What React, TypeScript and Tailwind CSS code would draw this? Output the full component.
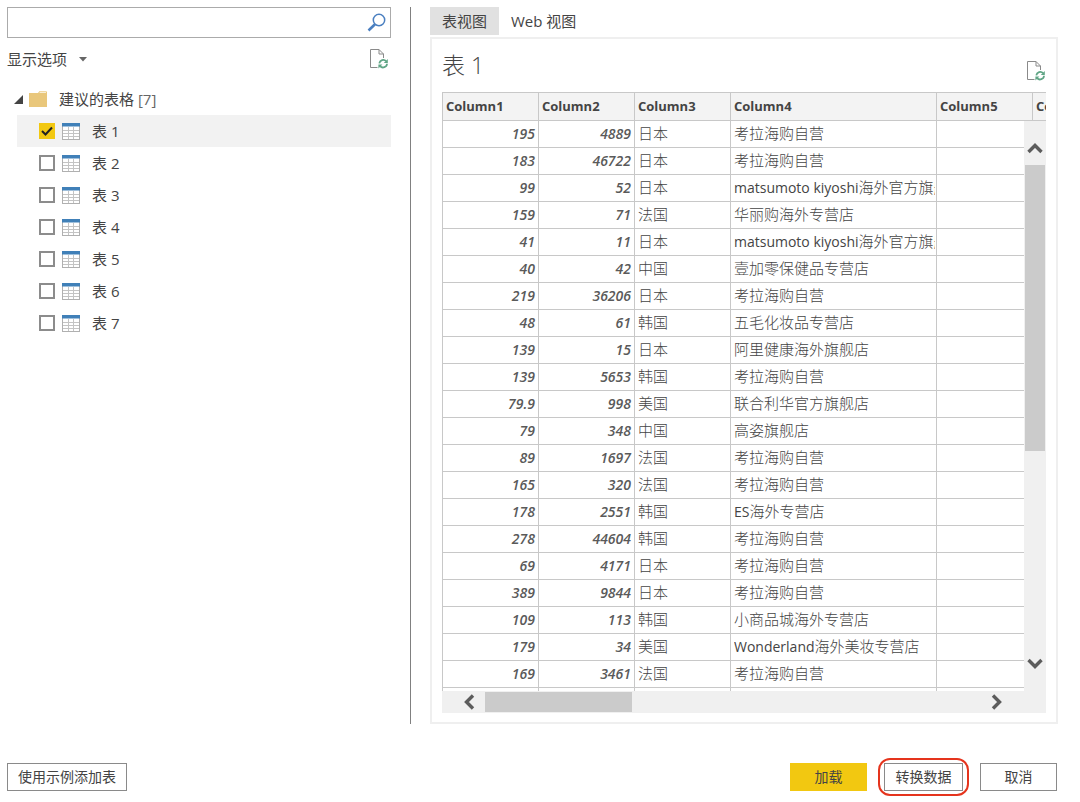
import { useState } from "react"

const tables = ["表 1", "表 2", "表 3", "表 4", "表 5", "表 6", "表 7"]

const columns = ["Column1", "Column2", "Column3", "Column4", "Column5", "Column6"]

// price, comments, country, latin part of the shop, rest of the shop
const rows = [
    ["195", "4889", "日本", "", "考拉海购自营"],
    ["183", "46722", "日本", "", "考拉海购自营"],
    ["99", "52", "日本", "matsumoto kiyoshi", "海外官方旗舰店"],
    ["159", "71", "法国", "", "华丽购海外专营店"],
    ["41", "11", "日本", "matsumoto kiyoshi", "海外官方旗舰店"],
    ["40", "42", "中国", "", "壹加零保健品专营店"],
    ["219", "36206", "日本", "", "考拉海购自营"],
    ["48", "61", "韩国", "", "五毛化妆品专营店"],
    ["139", "15", "日本", "", "阿里健康海外旗舰店"],
    ["139", "5653", "韩国", "", "考拉海购自营"],
    ["79.9", "998", "美国", "", "联合利华官方旗舰店"],
    ["79", "348", "中国", "", "高姿旗舰店"],
    ["89", "1697", "法国", "", "考拉海购自营"],
    ["165", "320", "法国", "", "考拉海购自营"],
    ["178", "2551", "韩国", "ES", "海外专营店"],
    ["278", "44604", "韩国", "", "考拉海购自营"],
    ["69", "4171", "日本", "", "考拉海购自营"],
    ["389", "9844", "日本", "", "考拉海购自营"],
    ["109", "113", "韩国", "", "小商品城海外专营店"],
    ["179", "34", "美国", "Wonderland", "海外美妆专营店"],
    ["169", "3461", "法国", "", "考拉海购自营"],
    ["", "", "", "", ""],
]

function RefreshIcon() {
    return (
        <svg width="20" height="20" viewBox="0 0 20 20" fill="none" aria-hidden="true">
            <path d="M8.5 18.5H1.5V.5H10l4.500 4.500V9" stroke="#8a8a8a" />
            <path d="M10 .5V5h4.500" stroke="#8a8a8a" />
            <path d="M10.300 14.300a4 4 0 0 1 6.800-2.100M18 14.700a4 4 0 0 1-6.900 2.500" stroke="#5fa585" strokeWidth="1.800" />
            <path d="M18.800 10v4h-4zM9.400 19.500v-4h4z" fill="#5fa585" />
        </svg>
    )
}

function TableIcon() {
    return (
        <svg width="18" height="17" viewBox="0 0 18 17" fill="none" aria-hidden="true">
            <rect x=".5" y=".5" width="17" height="16" fill="#fff" stroke="#b0b0b0" />
            <path d="M6.500 4v12M11.500 4v12M1 7.500h16M1 10.500h16M1 13.500h16" stroke="#c4c4c4" />
            <path d="M0 0h18v3.500H0z" fill="#4080b8" />
        </svg>
    )
}

function Arrow({ d, label, className }: { d: string; label: string; className: string }) {
    return (
        <button aria-label={label} className={className}>
            <svg width="16" height="16" viewBox="0 0 16 16" fill="none" aria-hidden="true">
                <path d={d} stroke="#5c5c5c" strokeWidth="3.400" />
            </svg>
        </button>
    )
}

function Sidebar() {
    const [checked, setChecked] = useState([0])

    function toggle(i: number) {
        setChecked(checked.includes(i) ? checked.filter((c) => c !== i) : [...checked, i])
    }

    return (
        <aside className="w-96 shrink-0">
            <div className="flex h-[31px] items-center border border-[#ababab] pr-1">
                <input type="text" aria-label="搜索" className="h-full min-w-0 flex-1 px-2 outline-none" />
                <button aria-label="搜索">
                    <svg width="19" height="19" viewBox="0 0 19 19" fill="none" aria-hidden="true">
                        <circle cx="12" cy="7" r="5.700" stroke="#4a7fc0" strokeWidth="1.500" />
                        <path d="M8 11.200L1.500 17.500" stroke="#4a7fc0" strokeWidth="2.600" />
                    </svg>
                </button>
            </div>

            <div className="mt-[7px] flex h-7 items-center justify-between pr-0.5">
                <button className="flex items-center gap-3">
                    显示选项
                    <svg width="8" height="5" viewBox="0 0 8 5" aria-hidden="true">
                        <path d="M0 0h8L4 4.500z" fill="#666" />
                    </svg>
                </button>
                <button aria-label="刷新"><RefreshIcon /></button>
            </div>

            <div className="mt-2.5 flex h-8 items-center pl-[7px]">
                <svg width="9" height="9" viewBox="0 0 9 9" aria-hidden="true">
                    <path d="M9 0v9H0z" fill="#444" />
                </svg>
                <svg className="ml-1.5" width="18" height="16" viewBox="0 0 18 16" aria-hidden="true">
                    <path d="M0 2h9l1.500-2H17l1 1v15H0z" fill="#e9c77b" />
                    <path d="M10.500 1.200H17" stroke="#fff" />
                </svg>
                <span className="ml-3">建议的表格 <span className="text-[#666]">[7]</span></span>
            </div>

            <ul className="ml-2.5">
                {tables.map((name, i) => (
                    <li key={name} className={i === 0 ? "bg-[#f2f2f2]" : ""}>
                        <label className="flex h-8 items-center pl-[22px]">
                            <span className="relative flex">
                                <input
                                    type="checkbox"
                                    checked={checked.includes(i)}
                                    onChange={() => toggle(i)}
                                    className="size-4 appearance-none border-2 border-[#8c8c8c] bg-white checked:border-[#f2c811] checked:bg-[#f2c811]"
                                />
                                {checked.includes(i) && (
                                    <svg className="pointer-events-none absolute inset-0" width="16" height="16" viewBox="0 0 16 16" fill="none">
                                        <path d="M3 8l3.500 3.500L13 4.500" stroke="#222" strokeWidth="2" />
                                    </svg>
                                )}
                            </span>
                            <span className="ml-[7px]"><TableIcon /></span>
                            <span className="ml-3">{name}</span>
                        </label>
                    </li>
                ))}
            </ul>
        </aside>
    )
}

function Preview() {
    return (
        <section className="flex min-w-0 flex-1 flex-col">
            <div className="flex h-[30px] shrink-0">
                <button className="h-7 bg-[#e1e1e1] px-3">表视图</button>
                <button className="h-7 px-3">Web 视图</button>
            </div>

            <div className="flex min-h-0 flex-1 flex-col border-2 border-[#efefef] px-2.5 pb-[9px]">
                <div className="flex h-[53px] shrink-0 items-center justify-between">
                    <h1 className="text-[23px] font-light">表 1</h1>
                    <button aria-label="刷新" className="mt-2.5"><RefreshIcon /></button>
                </div>

                <div className="relative min-h-0 flex-1 overflow-hidden">
                    <table className="w-[687px] table-fixed border-collapse text-left font-light">
                        <colgroup>
                            <col className="w-24" />
                            <col className="w-24" />
                            <col className="w-24" />
                            <col className="w-[206px]" />
                            <col className="w-24" />
                            <col className="w-24" />
                        </colgroup>
                        <thead>
                            <tr className="h-7 bg-[#f3f3f3]">
                                {columns.map((c) => (
                                    <th key={c} className="border border-[#c8c8c8] px-[3px] pt-0 pb-0.5 text-[13px] leading-5 font-bold">{c}</th>
                                ))}
                            </tr>
                        </thead>
                        <tbody>
                            {rows.map((r, i) => (
                                <tr key={i} className="h-[27px]">
                                    <td className="border border-[#c8c8c8] px-[3px] py-0 text-right text-sm leading-5 font-semibold text-[#5a5a5a] italic">{r[0]}</td>
                                    <td className="border border-[#c8c8c8] px-[3px] py-0 text-right text-sm leading-5 font-semibold text-[#5a5a5a] italic">{r[1]}</td>
                                    <td className="border border-[#c8c8c8] px-[3px] pt-0 pb-0.5 leading-5">{r[2]}</td>
                                    <td className="border border-[#c8c8c8] pt-0 pr-px pb-0.5 pl-[3px] leading-5">
                                        <div className="overflow-hidden whitespace-nowrap">
                                            <span className="text-sm leading-5 font-normal">{r[3]}</span>{r[4]}
                                        </div>
                                    </td>
                                    <td className="border border-[#c8c8c8]"></td>
                                    <td className="border border-[#c8c8c8]"></td>
                                </tr>
                            ))}
                        </tbody>
                    </table>

                    {/* vertical scrollbar, starts under the header row */}
                    <div className="absolute top-[29px] right-0 bottom-0 flex w-[22px] flex-col items-center bg-[#f0f0f0]">
                        <Arrow label="向上" d="M1.500 11L8 4.500 14.500 11" className="mt-5" />
                        <div className="mt-2 h-[286px] w-5 bg-[#cbcbcb]"></div>
                        <Arrow label="向下" d="M1.500 5L8 11.500 14.500 5" className="mt-auto mb-5" />
                    </div>
                </div>

                <div className="flex h-[22px] shrink-0 items-center bg-[#f0f0f0]">
                    <Arrow label="向左" d="M11 1.500L4.500 8 11 14.500" className="ml-5" />
                    <div className="ml-[7px] h-5 w-[147px] bg-[#cbcbcb]"></div>
                    <Arrow label="向右" d="M5 1.500L11.500 8 5 14.500" className="mr-[42px] ml-auto" />
                </div>
            </div>
        </section>
    )
}

export default function App() {
    return (
        <div className="flex h-screen flex-col bg-white pt-[7px] pr-[22px] pb-[11px] pl-[7px] font-['Open_Sans','Noto_Sans_CJK_SC',sans-serif] text-[15px] text-[#444]">
            <main className="flex min-h-0 flex-1">
                <Sidebar />
                <div className="mx-[19px] w-px shrink-0 bg-[#808080]"></div>
                <Preview />
            </main>

            <footer className="mt-[39px] flex shrink-0 gap-[17px] pr-px text-sm">
                <button className="mr-auto h-7 w-[120px] border border-[#8a8a8a]">使用示例添加表</button>
                <button className="h-7 w-[77px] bg-[#f2c811]">加载</button>
                <button className="relative h-7 w-[79px] border border-[#8a8a8a]">
                    转换数据
                    <span className="absolute -inset-x-[7px] -inset-y-1.5 rounded-xl border-2 border-[#e5341d]"></span>
                </button>
                <button className="h-7 w-[77px] border border-[#8a8a8a]">取消</button>
            </footer>
        </div>
    )
}
